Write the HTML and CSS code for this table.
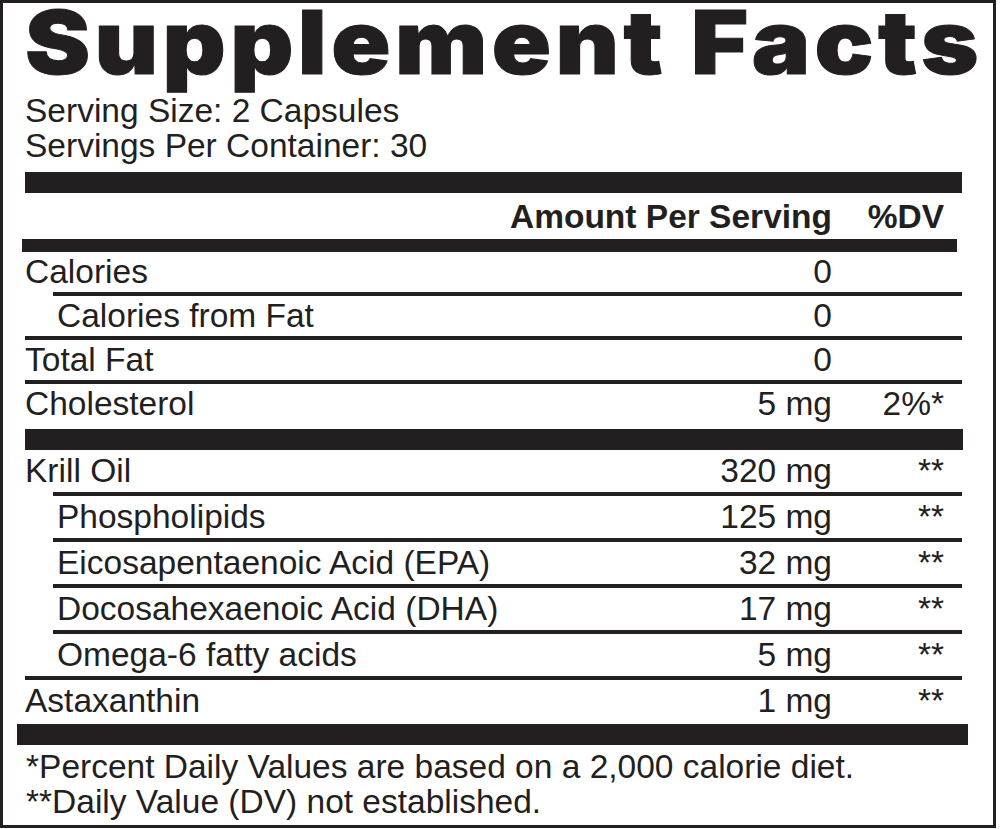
FILE: index.html
```html
<!DOCTYPE html>
<html lang="en">
<head>
<meta charset="utf-8">
<title>Supplement Facts</title>
<link rel="stylesheet" href="styles.css">
</head>
<body>
<div class="label">
  <h1 class="title">Supplement Facts</h1>
  <p class="serving">Serving Size: 2 Capsules</p>
  <p class="serving">Servings Per Container: 30</p>
  <div class="bar bar-a"></div>
  <div class="row head">
    <span></span>
    <span class="amt">Amount Per Serving</span>
    <span class="dv">%DV</span>
  </div>
  <div class="bar bar-b"></div>
  <div class="group g1">
    <div class="row"><span>Calories</span><span class="amt">0</span><span class="dv"></span></div>
    <div class="row sub"><span>Calories from Fat</span><span class="amt">0</span><span class="dv"></span></div>
    <div class="row ruled"><span>Total Fat</span><span class="amt">0</span><span class="dv"></span></div>
    <div class="row ruled last"><span>Cholesterol</span><span class="amt">5 mg</span><span class="dv">2%*</span></div>
  </div>
  <div class="bar bar-c"></div>
  <div class="group g2">
    <div class="row"><span>Krill Oil</span><span class="amt">320 mg</span><span class="dv">**</span></div>
    <div class="row sub"><span>Phospholipids</span><span class="amt">125 mg</span><span class="dv">**</span></div>
    <div class="row sub"><span>Eicosapentaenoic Acid (EPA)</span><span class="amt">32 mg</span><span class="dv">**</span></div>
    <div class="row sub"><span>Docosahexaenoic Acid (DHA)</span><span class="amt">17 mg</span><span class="dv">**</span></div>
    <div class="row sub"><span>Omega-6 fatty acids</span><span class="amt">5 mg</span><span class="dv">**</span></div>
    <div class="row ruled last"><span>Astaxanthin</span><span class="amt">1 mg</span><span class="dv">**</span></div>
  </div>
  <div class="bar bar-d"></div>
  <div class="notes">
    <p>*Percent Daily Values are based on a 2,000 calorie diet.</p>
    <p>**Daily Value (DV) not established.</p>
  </div>
</div>
</body>
</html>
```

FILE: styles.css
```css
* { box-sizing: border-box; }

html, body {
  margin: 0;
  padding: 0;
  background: #ffffff;
}

body {
  font-family: "Liberation Sans", Arial, sans-serif;
  color: #231f20;
  font-size: 33.5px;
}

.label {
  width: 996px;
  height: 828px;
  border: 3px solid #231f20;
  padding: 0 31px 0 22px;
}

.title {
  width: max-content;
  margin: 0;
  font-family: "Inter", "Liberation Sans", sans-serif;
  font-weight: 900;
  font-size: 88px;
  line-height: 78px;
  letter-spacing: 4px;
  white-space: nowrap;
  -webkit-text-stroke: 1px #231f20;
  transform: scaleX(1.112);
  transform-origin: 0 50%;
}

.serving {
  margin: 0;
  line-height: 35px;
}

.serving:first-of-type {
  margin-top: 12px;
}

.bar {
  background: #231f20;
}

.bar-a {
  height: 21px;
  margin-top: 9px;
}

.bar-b {
  height: 13px;
  margin: 0 5px 0 -3px;
}

.bar-c {
  height: 21px;
  margin-right: -1px;
}

.bar-d {
  height: 21px;
  margin: 0 -6px 0 -8px;
}

.row {
  display: grid;
  grid-template-columns: 1fr auto 112px;
  padding-right: 18px;
  line-height: 40px;
  white-space: nowrap;
}

.row .amt,
.row .dv {
  text-align: right;
}

.row.head {
  font-weight: bold;
  line-height: 38px;
  padding-top: 5px;
  padding-bottom: 3px;
}

.row.ruled {
  border-top: 4px solid #231f20;
}

.row.sub {
  border-top: 4px solid #231f20;
  margin-left: 28px;
  padding-left: 4px;
}

.g1 .row.last {
  padding-bottom: 5px;
}

.g2 .row {
  padding-top: 1px;
  padding-bottom: 1px;
}

.g2 .row.last {
  padding-bottom: 3px;
}

.notes {
  padding-top: 4px;
}

.notes p {
  margin: 0;
  line-height: 35px;
  padding-left: 1px;
}
```
